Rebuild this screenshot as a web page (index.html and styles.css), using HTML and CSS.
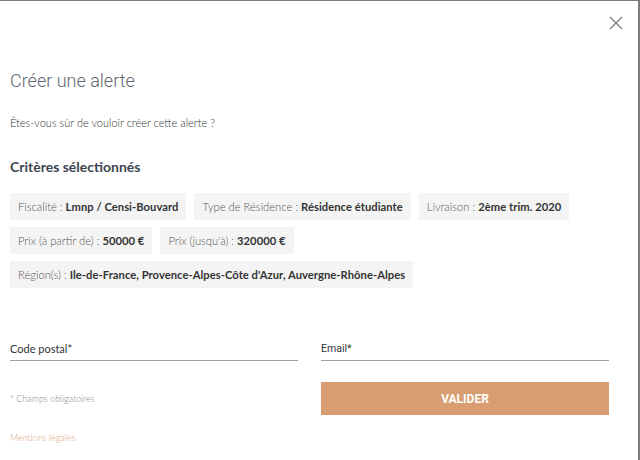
FILE: index.html
```html
<!DOCTYPE html>
<html lang="fr">
<head>
    <meta charset="UTF-8">
    <meta name="viewport" content="width=device-width, initial-scale=1.0">
    <title>Créer une alerte</title>
    <link rel="stylesheet" href="styles.css">
</head>
<body>
    <div class="modal">
        <button class="close-btn" type="button" aria-label="Fermer">
            <svg width="14" height="14" viewBox="0 0 14 14">
                <path d="M1 1 L13 13 M13 1 L1 13" stroke="#7a7f86" stroke-width="1.3" fill="none"/>
            </svg>
        </button>
        <h1 class="title">Créer une alerte</h1>
        <p class="intro">Êtes-vous sûr de vouloir créer cette alerte ?</p>

        <h2 class="subtitle">Critères sélectionnés</h2>
        <div class="criteria">
            <span class="chip">Fiscalité : <b>Lmnp / Censi-Bouvard</b></span>
            <span class="chip">Type de Résidence : <b>Résidence étudiante</b></span>
            <span class="chip">Livraison : <b>2ème trim. 2020</b></span>
            <span class="chip">Prix (à partir de) : <b>50000 €</b></span>
            <span class="chip">Prix (jusqu'à) : <b>320000 €</b></span>
            <span class="chip">Région(s) : <b>Ile-de-France, Provence-Alpes-Côte d'Azur, Auvergne-Rhône-Alpes</b></span>
        </div>

        <form class="alert-form" onsubmit="event.preventDefault()">
            <div class="field">
                <label for="cp">Code postal*</label>
                <input type="text" id="cp">
            </div>
            <div class="field">
                <label for="email" class="label-email">Email*</label>
                <input type="email" id="email">
            </div>
            <div class="form-foot">
                <p class="required">* Champs obligatoires</p>
                <a href="#" class="legal">Mentions légales</a>
            </div>
            <div>
                <button type="submit" class="submit-btn">VALIDER</button>
            </div>
        </form>
    </div>
</body>
</html>
```

FILE: styles.css
```css
html {
    background-color: #7c7c7c;
}
body {
    margin: 0;
    padding: 1px 2px 0 0;
    font-family: Lato, "Open Sans", sans-serif;
    color: #333;
}
.modal {
    position: relative;
    background-color: #fff;
    height: 459px;
    padding: 0 29px 0 10px;
    box-sizing: border-box;
    overflow: hidden;
}
.close-btn {
    position: absolute;
    top: 15px;
    right: 15px;
    border: none;
    background: none;
    padding: 0;
    cursor: pointer;
}
.close-btn svg {
    display: block;
}
.title {
    margin: 0;
    padding-top: 69px;
    font-family: Roboto, sans-serif;
    font-weight: 300;
    font-size: 18px;
    line-height: 22px;
    color: #616770;
}
.intro {
    margin: 24px 0 0;
    font-size: 11px;
    font-weight: 300;
    line-height: 14px;
    color: #333;
}
.subtitle {
    margin: 28px 0 0;
    font-size: 14px;
    font-weight: 700;
    line-height: 18px;
    color: #3c4550;
}
.criteria {
    display: flex;
    flex-wrap: wrap;
    gap: 7px 8px;
    margin-top: 17px;
}
.chip {
    background-color: #f4f4f4;
    padding: 0 8px;
    height: 27px;
    line-height: 27px;
    font-size: 11.2px;
    font-weight: 300;
    color: #555;
}
.chip b {
    font-weight: 700;
    color: #333;
    letter-spacing: 0.05px;
}
.alert-form {
    display: grid;
    grid-template-columns: 288px 288px;
    column-gap: 23px;
    margin-top: 54px;
}
.field label {
    display: block;
    font-size: 11px;
    line-height: 14px;
    color: #333;
}
.field .label-email {
    font-family: Roboto, sans-serif;
    font-size: 10.5px;
}
.field input {
    display: block;
    width: 100%;
    box-sizing: border-box;
    border: none;
    border-bottom: 1px solid #9aa1a8;
    height: 5px;
    padding: 0;
    outline: none;
}
.form-foot {
    padding-top: 32px;
}
.required {
    margin: 0;
    font-size: 9px;
    font-weight: 300;
    color: #888;
}
.legal {
    display: inline-block;
    margin-top: 28px;
    font-size: 9px;
    font-weight: 300;
    color: #e0a37c;
    text-decoration: none;
}
.submit-btn {
    margin-top: 21px;
    width: 100%;
    height: 33px;
    border: none;
    background-color: #d99d72;
    color: #fff;
    font-family: Roboto, sans-serif;
    font-weight: 700;
    font-size: 12px;
    cursor: pointer;
}
```
